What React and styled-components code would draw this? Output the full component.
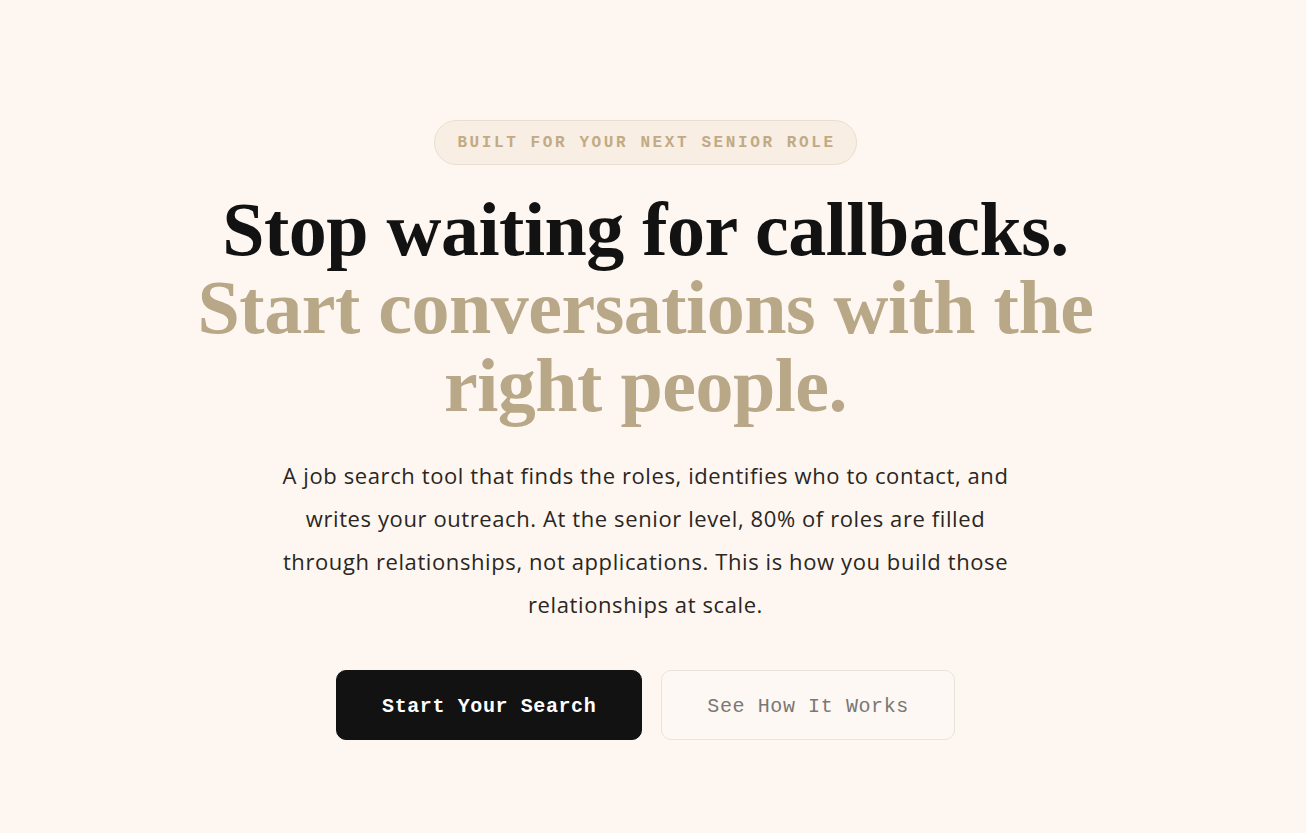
import React from 'react';
import styled, { createGlobalStyle } from 'styled-components';

const GlobalStyle = createGlobalStyle`
	html, body {
		margin: 0;
		padding: 0;
		background-color: #fef7f1;
	}
	* {
		box-sizing: border-box;
	}
`;

const App = () => {
	return (
		<>
			<GlobalStyle />
			<Hero>
				<Badge>Built for your next senior role</Badge>

				<Title>
					<Line>Stop waiting for callbacks.</Line>
					<Line $accent>Start conversations with the</Line>
					<Line $accent>right people.</Line>
				</Title>

				<Lead>
					A job search tool that finds the roles, identifies who to contact, and
					writes your outreach. At the senior level, 80% of roles are filled
					through relationships, not applications. This is how you build those
					relationships at scale.
				</Lead>

				<Actions>
					<Button $primary>Start Your Search</Button>
					<Button>See How It Works</Button>
				</Actions>
			</Hero>
		</>
	);
};

const Hero = styled.main`
	min-height: 100vh;
	display: flex;
	flex-direction: column;
	align-items: center;
	padding: 120px 15px 0 0;
	text-align: center;
`;

// 상단 알약 모양 배지
const Badge = styled.div`
	font-family: "Liberation Mono", "DejaVu Sans Mono", monospace;
	font-weight: 700;
	font-size: 16px;
	line-height: 20px;
	letter-spacing: 2.6px;
	text-transform: uppercase;
	color: #c1aa84;
	background-color: #f8eee3;
	border: 1px solid #eadfce;
	border-radius: 999px;
	padding: 12px 20px 11px 22px;
`;

const Title = styled.h1`
	margin: 25px 0 0;
	font-family: "Liberation Serif", "DejaVu Serif", serif;
	font-weight: 700;
	font-size: 76px;
	line-height: 78px;
	letter-spacing: -0.5px;
`;

const Line = styled.span`
	display: block;
	white-space: nowrap;
	color: ${({ $accent }) => ($accent ? '#b8a888' : '#121212')};
`;

const Lead = styled.p`
	margin: 30px 0 0;
	max-width: 740px;
	font-family: "Open Sans", "Noto Sans", sans-serif;
	font-size: 22px;
	line-height: 43px;
	letter-spacing: 0.6px;
	color: #2a2622;
`;

const Actions = styled.div`
	display: flex;
	gap: 19px;
	margin-top: 44px;
`;

const Button = styled.button`
	font-family: "Liberation Mono", "DejaVu Sans Mono", monospace;
	font-size: 20px;
	line-height: 24px;
	letter-spacing: 0.6px;
	font-weight: ${({ $primary }) => ($primary ? 700 : 400)};
	color: ${({ $primary }) => ($primary ? '#ffffff' : '#7a7774')};
	background-color: ${({ $primary }) => ($primary ? '#121212' : '#fdf8f4')};
	border: 1px solid ${({ $primary }) => ($primary ? '#121212' : '#e9e3dd')};
	border-radius: 10px;
	padding: 24px 45px 20px;
	cursor: pointer;
`;

export default App;
